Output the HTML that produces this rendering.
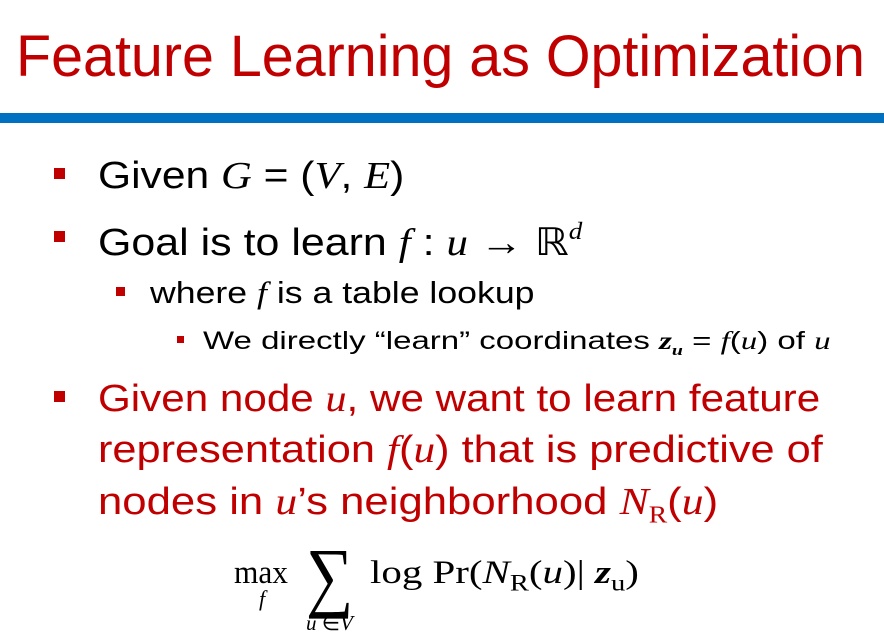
<!DOCTYPE html>
<html><head><meta charset="utf-8"><style>
body{margin:0;width:884px;height:641px;background:#fff;position:relative;overflow:hidden;font-family:"Liberation Sans",sans-serif}
.a{position:absolute;white-space:nowrap;line-height:1;transform-origin:left top}
.m{font-family:"Liberation Serif",serif;font-style:italic}
.r{font-family:"Liberation Serif",serif}
.sq{position:absolute;background:#c00000}
</style></head><body>
<div class="a" style="left:16px;top:28px;font-size:58px;color:#c00000;transform:scaleX(0.99)">Feature Learning as Optimization</div>
<div style="position:absolute;left:0;top:113px;width:884px;height:10px;background:#0070c0"></div>

<div class="sq" style="left:54px;top:168px;width:11px;height:11px"></div>
<div class="a" style="left:98px;top:157px;font-size:38px;color:#000;transform:scaleX(1.12)">Given <span class="m">G</span> = (<span class="m">V</span>, <span class="m">E</span>)</div>

<div class="sq" style="left:54px;top:231px;width:11px;height:11px"></div>
<div class="a" style="left:98px;top:220px;font-size:38px;color:#000;transform:scaleX(1.13)">Goal is to learn <span class="m">f</span> : <span class="m">u</span> → ℝ<sup class="m" style="font-size:24px;vertical-align:16px">d</sup></div>

<div class="sq" style="left:116px;top:287px;width:9px;height:9px"></div>
<div class="a" style="left:150px;top:277px;font-size:31px;color:#000;transform:scaleX(1.15)">where <span class="m">f</span> is a table lookup</div>

<div class="sq" style="left:177px;top:336px;width:7px;height:7px"></div>
<div class="a" style="left:203px;top:329px;font-size:25px;color:#000;transform:scaleX(1.32)">We directly “learn” coordinates <b class="m">z<sub style="font-size:15px">u</sub></b> = <span class="m">f</span>(<span class="m">u</span>) of <span class="m">u</span></div>

<div class="sq" style="left:54px;top:391px;width:11px;height:11px"></div>
<div class="a" style="left:98px;top:380px;font-size:38px;color:#c00000;transform:scaleX(1.11)">Given node <span class="m">u</span>, we want to learn feature</div>
<div class="a" style="left:98px;top:431px;font-size:38px;color:#c00000;transform:scaleX(1.14)">representation <span class="m">f</span>(<span class="m">u</span>) that is predictive of</div>
<div class="a" style="left:98px;top:483px;font-size:38px;color:#c00000;transform:scaleX(1.15)">nodes in <span class="m">u</span>’s neighborhood <span class="m">N</span><sub class="r" style="font-size:24px">R</sub>(<span class="m">u</span>)</div>

<div class="a r" style="left:234px;top:557px;font-size:33px;color:#000;transform:scaleX(0.95)">max</div>
<div class="a m" style="left:259px;top:588px;font-size:22px">f</div>
<div class="a r" style="left:306px;top:537px;font-size:78px;transform:scaleX(0.85)">∑</div>
<div class="a r" style="left:306px;top:613px;font-size:21px"><i>u</i> ∈<i>V</i></div>
<div class="a r" style="left:370px;top:557px;font-size:33px;color:#000;transform:scaleX(1.24)">log Pr(<i>N</i><sub style="font-size:23px">R</sub>(<i>u</i>)| <b><i>z</i></b><sub style="font-size:23px">u</sub>)</div>
</body></html>
